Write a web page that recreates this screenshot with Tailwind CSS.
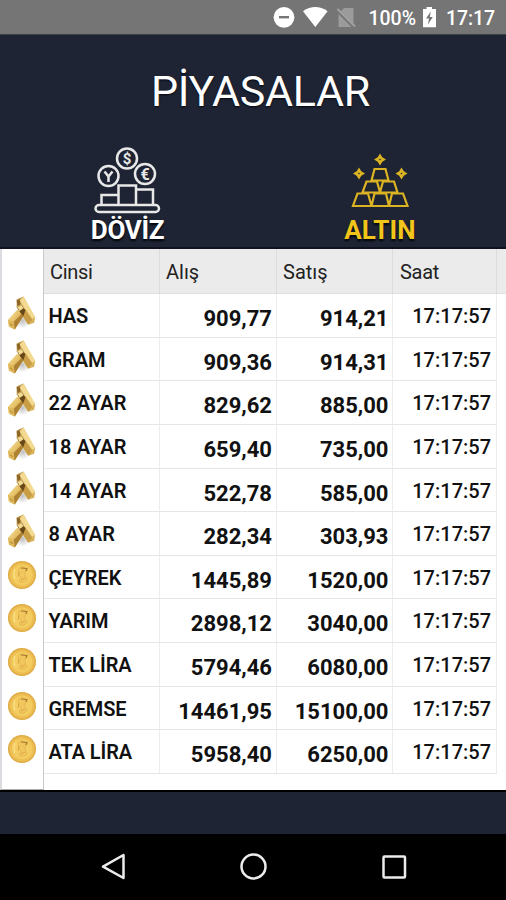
<!DOCTYPE html>
<html lang="tr">
<head>
<meta charset="utf-8">
<title>Piyasalar</title>
<script src="https://cdn.jsdelivr.net/npm/@tailwindcss/browser@4"></script>
</head>
<body class="w-[506px] h-[900px] overflow-hidden bg-black font-[Roboto,sans-serif] flex flex-col">
<svg class="w-0 h-0 shrink-0">
  <defs>
    <linearGradient id="gl" x1="0" y1="0" x2="1" y2="1"><stop offset="0" stop-color="#fbe9a8"/><stop offset=".5" stop-color="#e3bd62"/><stop offset="1" stop-color="#a37a2c"/></linearGradient>
    <linearGradient id="gr" x1="0" y1="0" x2="1" y2="1"><stop offset="0" stop-color="#a87c34"/><stop offset=".5" stop-color="#f0d68a"/><stop offset="1" stop-color="#d0a548"/></linearGradient>
    <radialGradient id="gc"><stop offset="0" stop-color="#f6d36c"/><stop offset=".75" stop-color="#f3ca5c"/><stop offset="1" stop-color="#e0aa42"/></radialGradient>
    <radialGradient id="sh"><stop offset="0" stop-color="#000" stop-opacity=".25"/><stop offset="1" stop-color="#000" stop-opacity="0"/></radialGradient>
    <symbol id="bars" viewBox="0 0 32 38">
      <ellipse cx="16" cy="26" rx="8" ry="8" fill="url(#sh)"/>
      <path d="M10 4L17 1L29 22L28 28L22 30L15 20L10 12Z" fill="url(#gr)"/>
      <path d="M17 1L29 22L26 24L13 5Z" fill="#f3da90"/>
      <path d="M16 14L19 14L26 25L22 30L16 21Z" fill="#c99d45"/>
      <path d="M10 5L13 4L14 9L11 11Z" fill="#8c6525"/>
      <path d="M10 15L16 13L18 19L8 35L2 32L1 25Z" fill="url(#gl)"/>
      <path d="M1 25L7 27L8 35L2 32Z" fill="#e0b85a"/>
      <path d="M7 27L16 18L17 21L8 35Z" fill="#ad8233"/>
      <path d="M11 13L15 10L19 15L17 21L14 18Z" fill="#69481a"/>
      <path d="M11 12L15 10L17 13L13 16Z" fill="#f2dc94"/>
      <path d="M3 29L6 31" stroke="#9a732a" stroke-width=".8"/>
    </symbol>
    <symbol id="coin" viewBox="0 0 30 30">
      <circle cx="15" cy="15" r="14" fill="url(#gc)"/>
      <circle cx="15" cy="15" r="13.2" fill="none" stroke="#dba440" stroke-width=".7" stroke-dasharray="1.2 1"/>
      <circle cx="15" cy="15" r="11" fill="none" stroke="#e8b850" stroke-width=".6"/>
      <path d="M12 8Q16 5 19 9L18 15L20 20Q15 24 12 21L14 17Q10 14 12 8Z" fill="#f1c65c" stroke="#dcab4a" stroke-width=".6"/>
      <path d="M14 8L20 8.500L19 11" fill="none" stroke="#a9782e" stroke-width="1.200"/>
      <path d="M12 12L11 17M14 20L18 18" fill="none" stroke="#d09c3c" stroke-width=".8"/>
      <path d="M8 9Q6 13 8 19" fill="none" stroke="#fae28e" stroke-width="1.2"/>
    </symbol>
  </defs>
</svg>

<header class="h-[34px] shrink-0 bg-[#757575] flex items-center text-white">
  <svg class="w-[246px] h-[34px] ml-[260px]" viewBox="0 0 246 34">
    <circle cx="24" cy="17.3" r="10.4" fill="#fff"/><rect x="19" y="16" width="10" height="2.4" fill="#757575"/>
    <path d="M43 11.2Q55.300 2.800 67.600 11.200L55.300 27Z" fill="#fff"/>
    <path d="M84 8H93.500V27H78.500V14Z" fill="#9b9b9b"/><path d="M76 9L94.500 27.500" stroke="#757575" stroke-width="3.500"/><path d="M77.500 9L95 26.500" stroke="#a3a3a3" stroke-width="1.800"/>
    <text x="108.500" y="25" font-size="19.500" font-weight="500" fill="#fff" textLength="47.500">100%</text>
    <path d="M163 9H166.500V7H172V9H176V27.300H163Z" fill="#fff"/><path d="M170.800 11.500L166 18.600H169L168 24.500L172.800 17H169.800Z" fill="#757575"/>
    <text x="186" y="25" font-size="19.500" font-weight="500" fill="#fff" textLength="49">17:17</text>
  </svg>
</header>

<section class="h-[215px] shrink-0 bg-[#1e2433] border-t border-t-[#3a3d46] border-b-2 border-b-[#10131f] text-white">
  <h1 class="h-[112px] pt-[30px] pl-[15px] text-center text-[43px] leading-[52px] tracking-[-0.3px] [text-shadow:0_1px_2px_#05070f]">PİYASALAR</h1>
  <nav class="grid grid-cols-2">
    <div class="flex flex-col items-center">
      <svg class="w-[68px] h-[68px]" viewBox="93 147 68 68" fill="none" stroke="#e8e8e8" stroke-width="2.500">
        <circle cx="127" cy="158.500" r="10"/><circle cx="108.500" cy="176" r="10"/><circle cx="145" cy="174" r="10"/>
        <path d="M101.500 204V195H118.500M118.500 204V185.500H136V204M136 189.500H153V204M118.500 195V204"/>
        <rect x="95.500" y="205" width="63.500" height="7" rx="3.500"/>
        <path d="M104.500 171.500L108.500 176.500L112.500 171.500M108.500 176V182"/>
        <text x="127" y="164" text-anchor="middle" font-size="15" font-weight="700" fill="#e8e8e8" stroke="none">$</text>
        <text x="145" y="179.500" text-anchor="middle" font-size="16" font-weight="700" fill="#e8e8e8" stroke="none">€</text>
      </svg>
      <span class="pl-[2px] text-[26px] leading-[31px] font-bold tracking-[-0.3px] [text-shadow:0_2px_2px_#03050b]">DÖVİZ</span>
    </div>
    <div class="flex flex-col items-center text-[#f2c51b]">
      <svg class="w-[68px] h-[68px]" viewBox="346 147 68 68" fill="none" stroke="#dcb323" stroke-width="2.200">
        <path d="M374.500 169H385.500L388.500 180.500H371.500ZM366.500 181.500H377L380 192.500H362.500ZM383 181.500H394L397.500 192.500H380ZM357.500 193.500H368L371.500 206H353ZM374.500 193.500H386L389 206H371.500ZM392 193.500H403L407.500 206H389Z"/>
        <g fill="#dcb323" stroke="none"><path id="star" fill-rule="evenodd" d="M380 153.500L382.300 157.200L386 159.500L382.300 161.800L380 165.500L377.700 161.800L374 159.500L377.700 157.200ZM380 158.700A.8 .8 0 1 0 380 160.300A.8 .8 0 1 0 380 158.700Z"/><use href="#star" x="-21" y="14"/><use href="#star" x="21.500" y="14"/></g>
      </svg>
      <span class="pl-[1px] text-[26px] leading-[31px] font-bold tracking-[0.2px] [text-shadow:0_2px_2px_#03050b]">ALTIN</span>
    </div>
  </nav>
</section>

<main class="h-[541px] shrink-0 bg-white flex text-[#111]">
  <aside class="w-[44px] shrink-0 border-l-2 border-l-[#dcdce0] border-r border-r-[#c9c9cb] border-b border-b-[#aaa] pt-[44px] bg-white">
    <div id="icons" class="h-[480px] grid grid-rows-11"></div>
  </aside>
  <div class="grow">
    <div class="h-[45px] bg-[#ebebeb] border-b border-b-[#dedede] grid grid-cols-[116px_117px_116px_104px_9px] text-[20px] leading-[46px] text-[#222]">
      <div class="border-r border-[#dcdcdc] pl-[6px] tracking-[-0.3px]">Cinsi</div><div class="border-r border-[#dcdcdc] pl-[6px]">Alış</div><div class="border-r border-[#dcdcdc] pl-[6px]">Satış</div><div class="border-r border-[#dcdcdc] pl-[7px] tracking-[-0.3px]">Saat</div><div></div>
    </div>
    <div id="rows" class="w-[453px] h-[480px] grid grid-rows-11"></div>
  </div>
</main>
<div class="h-[44px] shrink-0 bg-[#1e2433] border-t-2 border-black"></div>
<footer class="grow bg-black">
  <svg class="w-[506px] h-[66px]" viewBox="0 834 506 66" fill="none" stroke="#ececec" stroke-width="2.500">
    <path d="M123.500 855V878L103 866.700Z" stroke-linejoin="round"/><circle cx="253.500" cy="866.500" r="12"/><rect x="383.500" y="856.500" width="21.500" height="21" rx="1"/>
  </svg>
</footer>
<script>
const data = [
  ['HAS','909,77','914,21'],['GRAM','909,36','914,31'],['22 AYAR','829,62','885,00'],['18 AYAR','659,40','735,00'],
  ['14 AYAR','522,78','585,00'],['8 AYAR','282,34','303,93'],['ÇEYREK','1445,89','1520,00'],['YARIM','2898,12','3040,00'],
  ['TEK LİRA','5794,46','6080,00'],['GREMSE','14461,95','15100,00'],['ATA LİRA','5958,40','6250,00']];
document.getElementById('rows').innerHTML = data.map(([n,a,s]) => `
  <div class="grid grid-cols-[116px_117px_116px_104px] border-b border-[#e6e6e6]">
    <div class="border-r border-[#ececec] pl-[4.5px] pt-[9px] text-[20px] leading-[26px] font-semibold whitespace-nowrap ${n.endsWith('AYAR') ? 'tracking-[0.15px]' : 'tracking-[-0.1px]'}">${n}</div>
    <div class="border-r border-[#ececec] pr-[4px] pt-[12px] text-[22px] leading-[26px] font-bold text-right">${a}</div>
    <div class="border-r border-[#ececec] pr-[3.5px] pt-[12px] text-[22px] leading-[26px] font-bold text-right">${s}</div>
    <div class="border-r border-[#ececec] pr-[5px] pt-[9px] text-[20px] leading-[26px] font-medium text-right">17:17:57</div>
  </div>`).join('');
document.getElementById('icons').innerHTML = data.map((_, i) => i < 6
  ? '<div class="pl-[5px] pt-[2px]"><svg class="w-[31px] h-[38px]"><use href="#bars"/></svg></div>'
  : '<div class="pl-[5px] pt-[5px]"><svg class="w-[30px] h-[30px]"><use href="#coin"/></svg></div>').join('');
</script>
</body>
</html>
